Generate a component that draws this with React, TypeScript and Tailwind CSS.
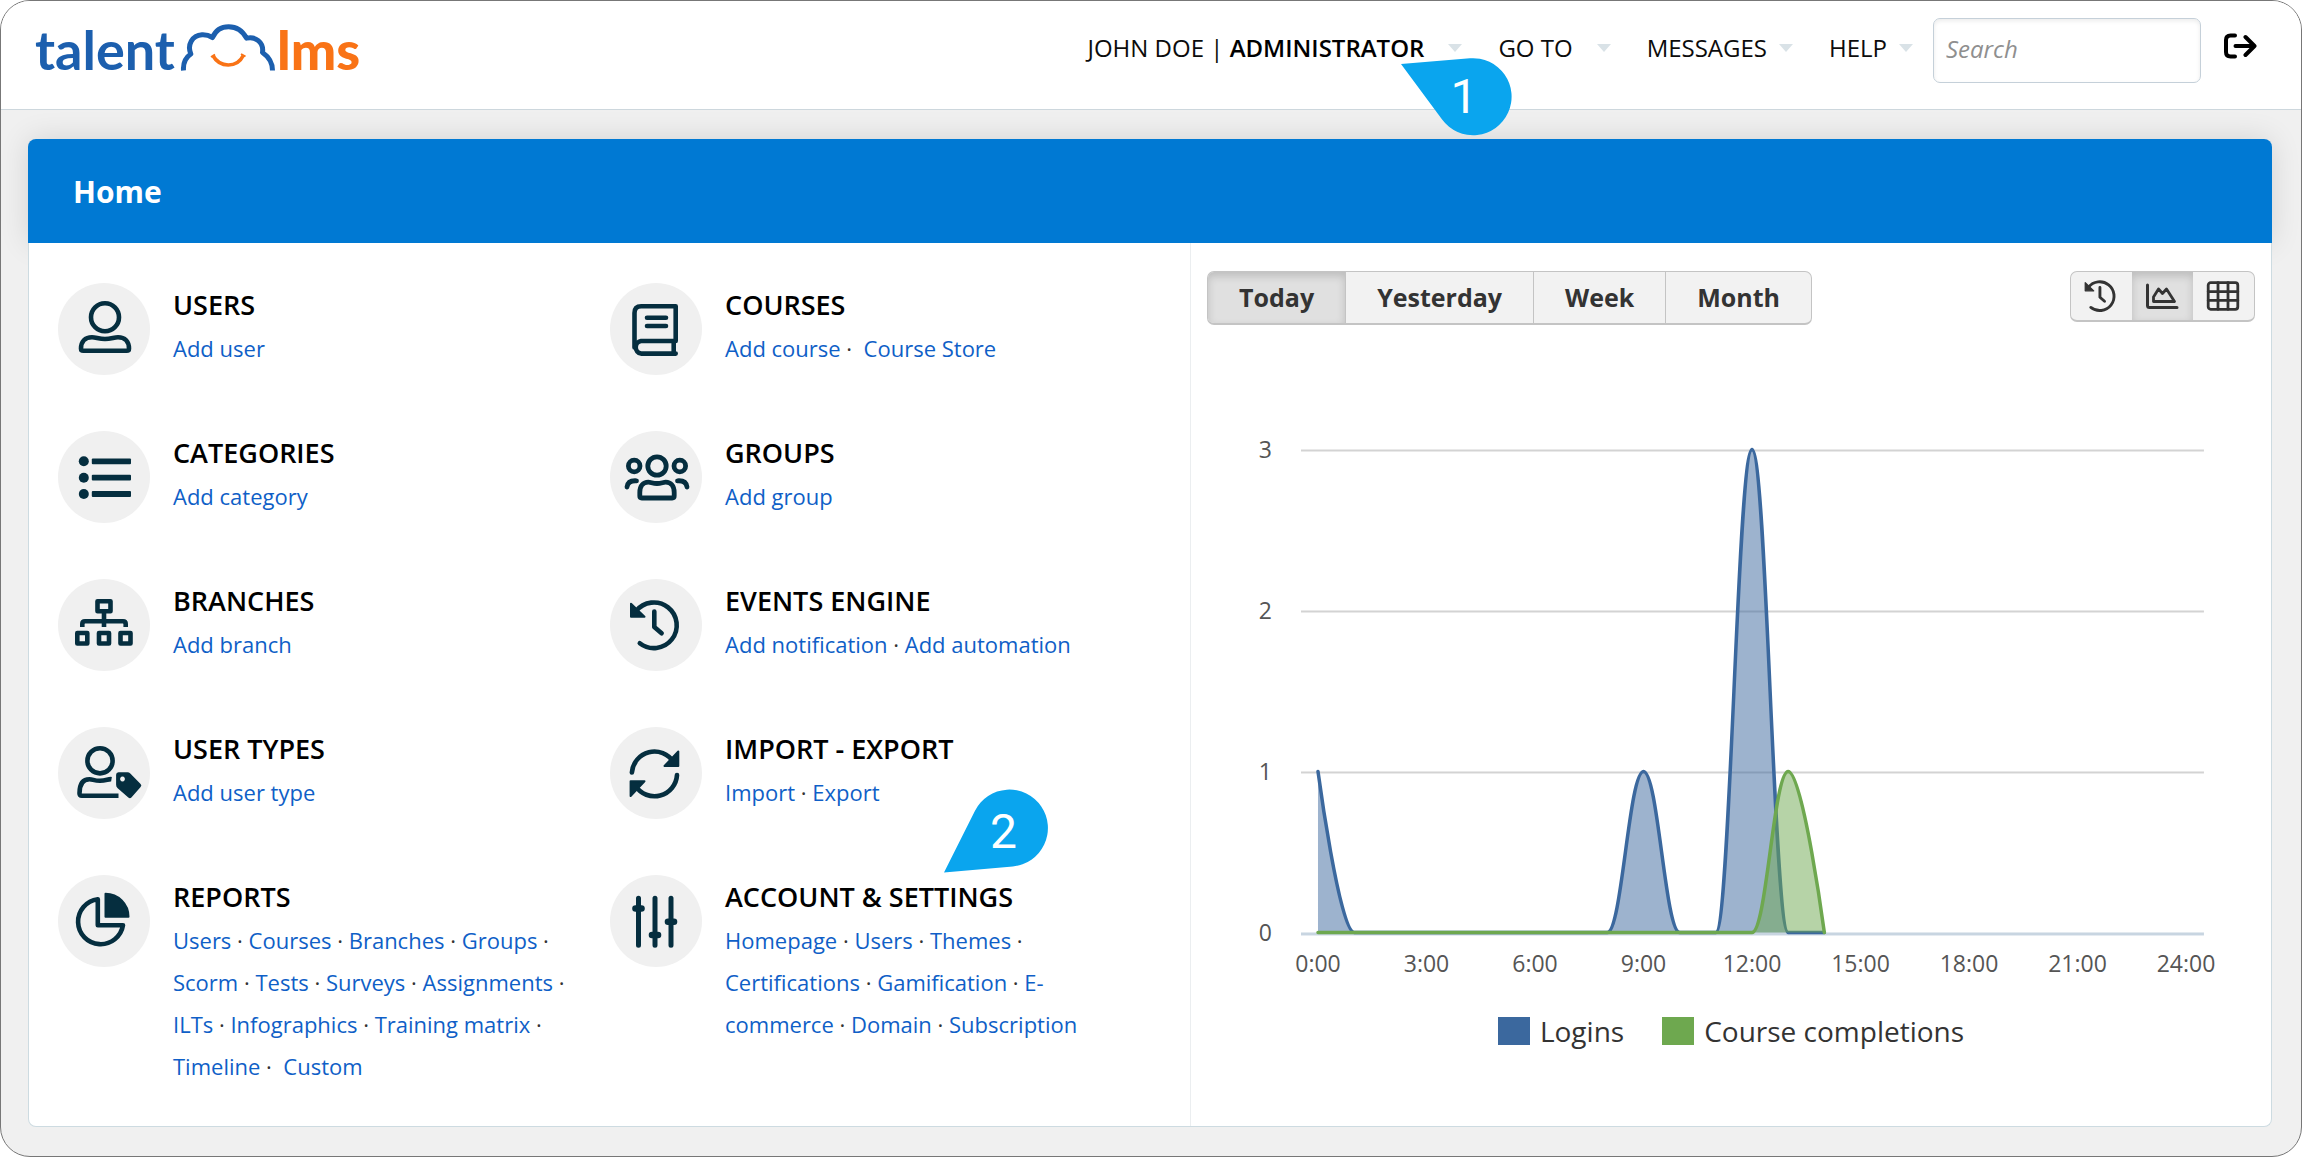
import React from "react";

type IconProps = { className?: string };

type MenuItem = {
  title: string;
  icon: React.FC<IconProps>;
  links: string[];
  // the last link of some sections stands a little further from its dot
  wideLast?: boolean;
  pin?: boolean;
};

const stroke = {
  fill: "none",
  stroke: "currentColor",
  strokeWidth: 4.6,
  strokeLinecap: "round",
  strokeLinejoin: "round",
} as const;

const UserIcon: React.FC<IconProps> = ({ className }) => (
  <svg viewBox="0 0 92 92" className={className} aria-hidden="true" {...stroke}>
    <circle cx="47" cy="34.3" r="14" />
    <path d="M23 65.5c0-7 4-11.3 11-11.3 4 0 7 1.8 13 1.8s9-1.8 13-1.8c7 0 11 4.3 11 11.3q0 2.3-2.3 2.3H25.3q-2.3 0-2.3-2.3z" />
  </svg>
);

const BookIcon: React.FC<IconProps> = ({ className }) => (
  <svg viewBox="0 0 92 92" className={className} aria-hidden="true" {...stroke}>
    <path d="M24.5 64.5V30q0-6.7 6.7-6.7H65.7V58H31a6.4 6.4 0 0 0 0 12.6H65.7M63.7 58v12" />
    <path d="M37 34.7h19M37 43h19" />
  </svg>
);

const ListIcon: React.FC<IconProps> = ({ className }) => (
  <svg viewBox="0 0 92 92" className={className} aria-hidden="true" fill="currentColor">
    <circle cx="25.8" cy="30.3" r="5" />
    <circle cx="25.8" cy="46.7" r="5" />
    <circle cx="25.8" cy="63" r="5" />
    <rect x="33.8" y="27.4" width="39.2" height="5.8" rx="1" />
    <rect x="33.8" y="43.8" width="39.2" height="5.8" rx="1" />
    <rect x="33.8" y="60.1" width="39.2" height="5.8" rx="1" />
  </svg>
);

const GroupIcon: React.FC<IconProps> = ({ className }) => (
  <svg viewBox="0 0 92 92" className={className} aria-hidden="true" {...stroke} strokeWidth={4.8}>
    <circle cx="47" cy="35" r="9.2" />
    <circle cx="24.2" cy="35" r="5.8" />
    <circle cx="69.8" cy="35" r="5.8" />
    <path d="M29.8 65v-3.5c0-6.5 3.5-10.3 8.5-10.3 2.5 0 4.5 1.3 8.7 1.3s6.2-1.3 8.700-1.3c5 0 8.5 3.8 8.5 10.3V65q0 2-2 2H31.8q-2 0-2-2z" />
    <path d="M17 56c.6-4.5 3.8-6.6 9.5-6.200M77 56c-.6-4.5-3.8-6.6-9.5-6.2" />
  </svg>
);

const BranchIcon: React.FC<IconProps> = ({ className }) => (
  <svg viewBox="0 0 92 92" className={className} aria-hidden="true" {...stroke}>
    <rect x="39.5" y="22.3" width="13" height="10" />
    <path d="M46 34v14M24.3 48v-3q0-2.7 2.7-2.7h38q2.7 0 2.7 2.7v3" strokeLinecap="butt" />
    <rect x="19.3" y="54" width="10" height="10.5" />
    <rect x="41" y="54" width="10" height="10.5" />
    <rect x="62.5" y="54" width="10" height="10.5" />
  </svg>
);

const HistoryIcon: React.FC<IconProps> = ({ className }) => (
  <svg viewBox="0 0 92 92" className={className} aria-hidden="true" {...stroke}>
    <path d="M26 32.2A22.8 22.8 0 1 1 29.8 64.2" />
    <path d="M21 24.8v13h13.5z" fill="currentColor" strokeWidth="2" />
    <path d="M44.3 32.5V48l7.3 6.3" />
  </svg>
);

const UserTagIcon: React.FC<IconProps> = ({ className }) => (
  <svg viewBox="0 0 92 92" className={className} aria-hidden="true" {...stroke}>
    <circle cx="42" cy="33.8" r="12.6" />
    <path
      d="M53.5 52.2c-3-.5-5.5 1.6-11.5 1.6s-7-1.6-10.5-1.6c-6.5 0-10 4.5-10 14q0 2.5 2.3 2.5H60.5"
      strokeLinecap="butt"
    />
    <path
      d="M60.5 45.2h9q1.6 0 2.8 1.2l10.3 10.5q1.5 1.6 0 3.2l-9.2 10.3q-1.5 1.5-3.1 0L59.7 61.2q-1.6-1.5-1.6-3.5v-10q0-2.5 2.4-2.5zM64.5 49.6a2.4 2.4 0 1 0 .01 0z"
      fill="currentColor"
      fillRule="evenodd"
      stroke="none"
    />
  </svg>
);

const SyncIcon: React.FC<IconProps> = ({ className }) => (
  <svg viewBox="0 0 92 92" className={className} aria-hidden="true" {...stroke}>
    <path d="M21.9 45.5A22.6 22.6 0 0 1 63.5 35M67 48A22.6 22.6 0 0 1 25.5 59" />
    <path
      d="M68.3 24.5V39H54.5zM20.6 69V54.3H34.5z"
      fill="currentColor"
      strokeWidth="2"
    />
  </svg>
);

const PieIcon: React.FC<IconProps> = ({ className }) => (
  <svg viewBox="0 0 92 92" className={className} aria-hidden="true" {...stroke}>
    <path d="M39.8 24.2V50.2H65A22.6 22.6 0 1 1 39.8 24.2z" />
    <path d="M47.5 18.7A23 23 0 0 1 70.5 41.7H47.5z" fill="currentColor" strokeWidth="2" />
  </svg>
);

const SlidersIcon: React.FC<IconProps> = ({ className }) => (
  <svg viewBox="0 0 92 92" className={className} aria-hidden="true" {...stroke} strokeWidth={5}>
    <path d="M28.5 23.2v47M45 23.2v47M61 23.2v47" />
    <path d="M25.5 33.5h6M42 60h6M58 46.7h6" strokeWidth="6.6" />
  </svg>
);

const AreaChartIcon: React.FC<IconProps> = ({ className }) => (
  <svg viewBox="0 0 34 34" className={className} aria-hidden="true" {...stroke} strokeWidth={3}>
    <path d="M2.5 6v20.5q0 2 2 2H32" />
    <path d="M8.5 22.5V18l5-8 4 4.5 4-4.5 8 12.5z" strokeWidth="2.8" />
  </svg>
);

const TableIcon: React.FC<IconProps> = ({ className }) => (
  <svg viewBox="0 0 34 34" className={className} aria-hidden="true" {...stroke} strokeWidth={2.8}>
    <rect x="2.2" y="3.7" width="29.6" height="26.6" rx="2.5" />
    <path d="M2.2 12.6h29.6M2.2 21.4h29.6M12 3.7v26.6M22 3.7v26.6" />
  </svg>
);

const menuItems: MenuItem[] = [
  { title: "USERS", icon: UserIcon, links: ["Add user"] },
  { title: "COURSES", icon: BookIcon, links: ["Add course", "Course Store"], wideLast: true },
  { title: "CATEGORIES", icon: ListIcon, links: ["Add category"] },
  { title: "GROUPS", icon: GroupIcon, links: ["Add group"] },
  { title: "BRANCHES", icon: BranchIcon, links: ["Add branch"] },
  { title: "EVENTS ENGINE", icon: HistoryIcon, links: ["Add notification", "Add automation"] },
  { title: "USER TYPES", icon: UserTagIcon, links: ["Add user type"] },
  { title: "IMPORT - EXPORT", icon: SyncIcon, links: ["Import", "Export"] },
  {
    title: "REPORTS",
    icon: PieIcon,
    links: [
      "Users",
      "Courses",
      "Branches",
      "Groups",
      "Scorm",
      "Tests",
      "Surveys",
      "Assignments",
      "ILTs",
      "Infographics",
      "Training matrix",
      "Timeline",
      "Custom",
    ],
    wideLast: true,
  },
  {
    title: "ACCOUNT & SETTINGS",
    icon: SlidersIcon,
    links: [
      "Homepage",
      "Users",
      "Themes",
      "Certifications",
      "Gamification",
      "E-commerce",
      "Domain",
      "Subscription",
    ],
    pin: true,
  },
];

const Caret = () => (
  <svg viewBox="0 0 14 8" className="h-2 w-3.5" aria-hidden="true">
    <path d="M0 0h14L7 8z" fill="#d9e2e7" />
  </svg>
);

const Logo = () => (
  <a
    href="#"
    className="flex items-start font-[Lato,sans-serif] text-[54px] leading-[64px] font-bold"
  >
    <span className="text-[#1c5fae]">talent</span>
    <svg viewBox="0 0 98 52" className="ml-1 mt-[3px] h-[52px] w-[98px]" fill="none" aria-hidden="true">
      <path
        d="M4.5 49.5C4 42 6.5 36.5 11.8 33 8 24 13 14.5 23 13.8q5.5-.3 10.5 2.7C36.5 9.5 42 5.7 49.6 5.7S63.5 9.5 67.5 17.2C76 15 85 21 83.5 31.5 90 36 93.5 42 93.5 49.5"
        stroke="#1c5fae"
        strokeWidth="5"
        strokeLinejoin="round"
      />
      <path d="M33.8 34.5C37.5 41 42.5 44 49.3 44s11.8-3 15-9.5" stroke="#f97316" strokeWidth="3.6" />
      <path d="M32 36l4-2.5M62 33l4.5 2.5" stroke="#f97316" strokeWidth="2" />
    </svg>
    <span className="font-black text-[#f97316]">lms</span>
  </a>
);

const Header = () => (
  <header className="flex h-[109px] items-start justify-between border-b border-[#cdd7dd] bg-white pt-[17px] pr-[44px] pl-[34px]">
    <Logo />
    <div className="flex items-start text-2xl text-[#0c0c0c]">
      <nav className="flex h-[60px] items-center gap-9 whitespace-nowrap">
        <div className="relative">
          <button type="button" className="flex items-center gap-6">
            <span>
              JOHN DOE | <span className="font-semibold text-black">ADMINISTRATOR</span>
            </span>
            <Caret />
          </button>
          <div className="absolute top-[26px] right-[-50px] z-10 h-[78px] w-[111px] text-[#0aa5ee]">
            <svg viewBox="0 0 111 78" className="h-full w-full" fill="currentColor" aria-hidden="true">
              <path d="M0 6L68.9.3A38.5 38.5 0 1 1 41.1 61.5z" />
            </svg>
            <span className="absolute inset-y-0 right-0 left-[14px] flex items-center justify-center font-[Roboto,sans-serif] text-5xl leading-none text-white">
              1
            </span>
          </div>
        </div>
        <button type="button" className="flex items-center gap-6">
          GO TO <Caret />
        </button>
        <button type="button" className="flex items-center gap-3">
          MESSAGES <Caret />
        </button>
        <button type="button" className="flex items-center gap-3">
          HELP <Caret />
        </button>
      </nav>
      <input
        type="search"
        aria-label="Search"
        placeholder="Search"
        className="ml-5 h-[65px] w-[268px] rounded-[7px] border border-[#c5d0d9] px-3 pb-1 italic shadow-[inset_0_2px_4px_rgba(0,0,0,0.08)] placeholder:text-[#8f8f8f]"
      />
      <a href="#" aria-label="Log out" className="ml-[22px] flex h-14 items-center text-black">
        <svg viewBox="0 0 34 28" className="h-7 w-[34px]" {...stroke} strokeWidth={4} aria-hidden="true">
          <path d="M12 3.5H7.5Q3 3.5 3 8v12q0 4.5 4.5 4.5H12" />
          <path d="M12.5 14H31M22.5 5l9 9-9 9" />
        </svg>
      </a>
    </div>
  </header>
);

const MenuCard: React.FC<{ item: MenuItem }> = ({ item }) => {
  const Icon = item.icon;
  return (
    <li className="flex items-start gap-[23px] pr-4">
      <div className="size-[92px] shrink-0 rounded-full bg-[#f0f0f0] text-[#052e3f]">
        <Icon className="size-[92px]" />
      </div>
      <div className="min-w-0">
        <h2 className="text-[27px] leading-[44px] font-semibold text-black">
          <span className="relative">
            {item.title}
            {item.pin && (
              <span className="absolute right-[-36px] bottom-[42px] block h-[84px] w-[105px] text-[#0aa5ee]">
                <svg viewBox="0 0 105 84" className="h-full w-full" fill="currentColor" aria-hidden="true">
                  <path d="M0 83.5L31 21.8A38.5 38.5 0 1 1 68.8 77.4z" />
                </svg>
                <span className="absolute top-0 right-0 left-[14px] flex h-[86px] items-center justify-center font-[Roboto,sans-serif] text-5xl font-normal text-white">
                  2
                </span>
              </span>
            )}
          </span>
        </h2>
        <p className="text-[22px] leading-[42px] text-[#333]">
          {item.links.map((link, index) => {
            const last = index === item.links.length - 1;
            return (
              <React.Fragment key={link}>
                {index > 0 && (last && item.wideLast ? " · \u00a0" : " · ")}
                <a href="#" className="text-[#0f5fc7]">
                  {link}
                </a>
              </React.Fragment>
            );
          })}
        </p>
      </div>
    </li>
  );
};

// plot geometry, in svg units
const X0 = 111;
const HOUR = 36.17;
const Y0 = 507.5;
const UNIT = 161;
const px = (hour: number) => X0 + hour * HOUR;
const py = (value: number) => Y0 - value * UNIT;

// rise to a peak at the given hour and fall back to zero an hour later
const peak = (hour: number, value: number, atEnd = false) => {
  const fallX = atEnd ? px(hour + 1) : px(hour + 0.6);
  return (
    `L${px(hour - 1)} ${py(0)}` +
    `C${px(hour - 0.6)} ${py(0)} ${px(hour - 0.4)} ${py(value)} ${px(hour)} ${py(value)}` +
    `C${px(hour + 0.4)} ${py(value)} ${fallX} ${py(0)} ${px(hour + 1)} ${py(0)}`
  );
};

const loginsLine =
  `M${px(0)} ${py(1)}C${px(0)} ${py(1)} ${px(0.6)} ${py(0)} ${px(1)} ${py(0)}` +
  peak(9, 1) +
  peak(12, 3) +
  `L${px(14)} ${py(0)}`;
const completionsLine = `M${px(0)} ${py(0)}` + peak(13, 1, true);

const ActivityChart = () => (
  <svg
    viewBox="0 0 1048 560"
    className="mt-[100px] w-full text-[23px]"
    role="img"
    aria-label="Logins and course completions by hour"
  >
    {[3, 2, 1].map((value) => (
      <rect key={value} x="94" y={py(value)} width="903" height="2" fill="#d3d3d3" />
    ))}
    <rect x="94" y={Y0} width="903" height="3" fill="#c8d5e1" />
    <path d={`${loginsLine}L${px(0)} ${py(0)}z`} fill="#3b689e" fillOpacity="0.5" />
    <path d={loginsLine} fill="none" stroke="#3b689e" strokeWidth="3.5" strokeLinecap="round" strokeLinejoin="round" />
    <path d={`${completionsLine}z`} fill="#6ea84f" fillOpacity="0.5" />
    <path d={completionsLine} fill="none" stroke="#6ea84f" strokeWidth="3.5" strokeLinecap="round" strokeLinejoin="round" />
    <g fill="#555" textAnchor="end">
      {[3, 2, 1, 0].map((value) => (
        <text key={value} x="65" y={py(value) + 9}>
          {value}
        </text>
      ))}
    </g>
    <g fill="#555" textAnchor="middle">
      {[0, 3, 6, 9, 12, 15, 18, 21, 24].map((hour) => (
        <text key={hour} x={px(hour)} y="547">
          {hour}:00
        </text>
      ))}
    </g>
  </svg>
);

const ranges = ["Today", "Yesterday", "Week", "Month"];

const views = [
  { label: "Timeline", icon: HistoryIcon, iconClass: "size-[58px]", active: false },
  { label: "Chart", icon: AreaChartIcon, iconClass: "size-[34px]", active: true },
  { label: "Table", icon: TableIcon, iconClass: "size-[34px]", active: false },
];

const ActivityPanel = () => (
  <section className="border-l border-[#ebeef0] px-4 pt-7">
    <div className="flex items-start justify-between">
      <div className="flex h-[54px] overflow-hidden rounded-[7px] border border-b-2 border-[#c4c4c4] bg-[#f2f2f2]">
        {ranges.map((range, index) => (
          <button
            key={range}
            type="button"
            className={`border-[#c4c4c4] px-[31px] text-[25px] font-bold text-[#333] ${
              index === 0
                ? "bg-[#e0e0e0] shadow-[inset_0_4px_8px_rgba(0,0,0,0.16)]"
                : "border-l"
            }`}
          >
            {range}
          </button>
        ))}
      </div>
      <div className="flex h-[51px] overflow-hidden rounded-[7px] border border-b-2 border-[#c4c4c4] bg-[#f2f2f2]">
        {views.map((view) => {
          const Icon = view.icon;
          return (
            <button
              key={view.label}
              type="button"
              aria-label={view.label}
              className={`flex w-[61px] items-center justify-center text-[#333] ${
                view.active
                  ? "bg-[#e0e0e0] shadow-[inset_0_4px_8px_rgba(0,0,0,0.16)]"
                  : ""
              }`}
            >
              <Icon className={`shrink-0 ${view.iconClass}`} />
            </button>
          );
        })}
      </div>
    </div>
    <ActivityChart />
    <div className="mt-7 flex justify-center gap-[38px] text-[28px] leading-9 text-[#333]">
      <div className="flex items-center gap-2.5">
        <span className="h-7 w-8 bg-[#3b689e]" />
        Logins
      </div>
      <div className="flex items-center gap-2.5">
        <span className="h-7 w-8 bg-[#6ea84f]" />
        Course completions
      </div>
    </div>
  </section>
);

const App: React.FC = () => {
  return (
    <div className="bg-white font-['Open_Sans',sans-serif]">
      <div className="flex min-h-screen flex-col overflow-hidden rounded-[30px] border border-[#777] bg-[#f0f0f0]">
        <Header />
        <main className="mt-[29px] mr-[29px] mb-[29px] ml-[27px] flex flex-1 flex-col">
          <h1 className="flex h-[104px] items-center rounded-t-lg bg-[#0079d3] px-[45px] text-[30px] font-bold text-white shadow-[0_0_30px_rgba(0,0,0,0.12)]">
            Home
          </h1>
          <div className="relative grid flex-1 grid-cols-[29fr_27fr] rounded-b-lg border border-t-0 border-[#cddbe1] bg-white">
            <ul className="grid grid-cols-2 content-start gap-y-14 pt-10 pr-7 pb-[30px] pl-[29px]">
              {menuItems.map((item) => (
                <MenuCard key={item.title} item={item} />
              ))}
            </ul>
            <ActivityPanel />
          </div>
        </main>
      </div>
    </div>
  );
};

export default App;
